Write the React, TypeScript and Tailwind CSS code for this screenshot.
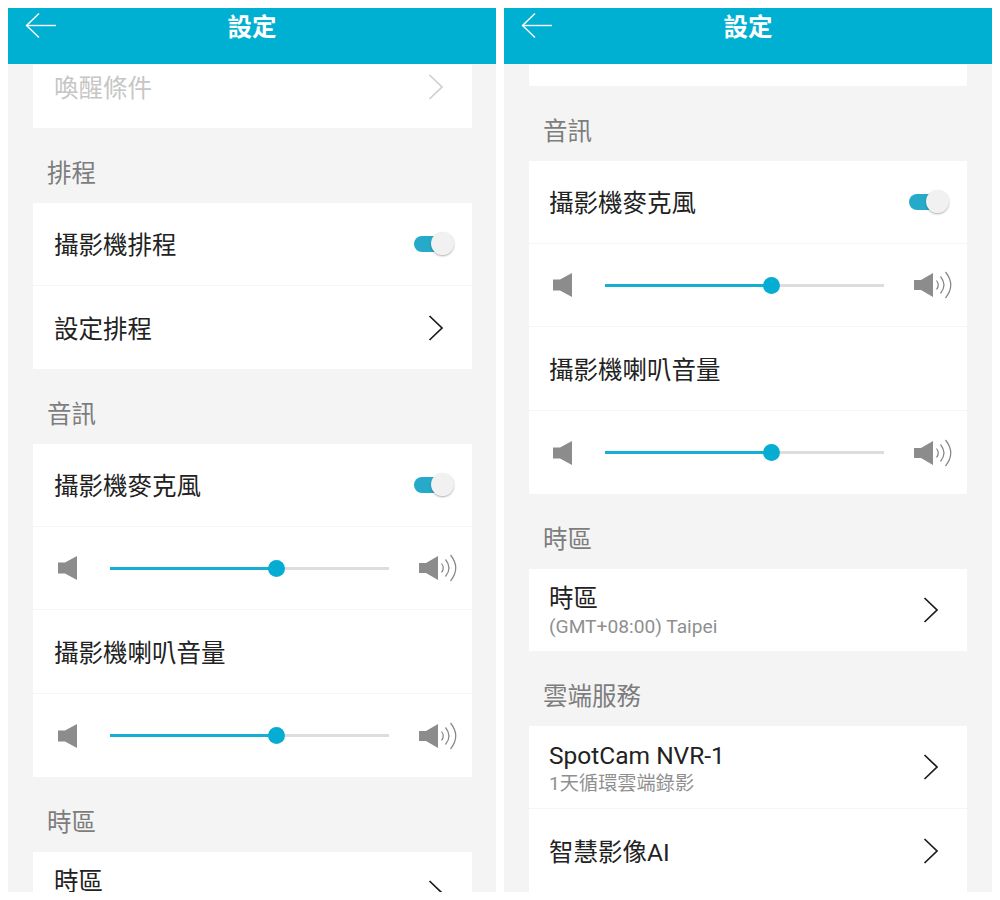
import type { ReactNode } from "react";

function BackArrow() {
  return (
    <svg width="32" height="28" viewBox="0 0 32 28" fill="none" stroke="white" strokeWidth="1.4" className="absolute left-[17px] top-[4px]">
      <path d="M14 1.5 1.5 13.5 14 25.5" />
      <path d="M1.5 13.5H31" />
    </svg>
  );
}

function Chevron({ light }: { light?: boolean }) {
  return (
    <svg width="16" height="26" viewBox="0 0 16 26" fill="none" stroke={light ? "#cfcfcf" : "#1a1a1a"} strokeWidth="1.7" className="mr-[10px]">
      <path d="M1.5 1 14 13 1.5 25" />
    </svg>
  );
}

function Toggle() {
  return (
    <div className="relative h-[24px] w-[40px]">
      <div className="absolute left-0 top-[4px] h-[16px] w-[30px] rounded-full bg-[#26aac9]" />
      <div className="absolute right-0 top-0 h-[23px] w-[23px] rounded-full bg-[#f1f1f1] shadow-[0_1px_2px_rgba(0,0,0,0.3)]" />
    </div>
  );
}

function SpeakerSmall() {
  return (
    <svg width="20" height="24" viewBox="0 0 20 24" fill="#8c8c8c">
      <path d="M0 6.5h7L19 0v24L7 17.500H0z" />
    </svg>
  );
}

function SpeakerLarge() {
  return (
    <svg width="38" height="28" viewBox="0 0 38 28">
      <path d="M0 9h7L19 2v24L7 19H0z" fill="#8c8c8c" />
      <g fill="none" stroke="#858585" strokeWidth="1.2">
        <path d="M22.500 9.500q3.500 4.500 0 9" />
        <path d="M26.500 5.500q7 8.500 0 17" />
        <path d="M31.500 1q10.500 13 0 26" />
      </g>
    </svg>
  );
}

function Row({ children, right, height = "h-[83px]" }: { children: ReactNode; right?: ReactNode; height?: string }) {
  return (
    <div className={`flex items-center justify-between border-b border-[#f5f5f5] pl-[var(--row-pl)] pr-[18px] last:border-b-0 ${height}`}>
      <div className="min-w-0">{children}</div>
      {right}
    </div>
  );
}

function Title({ text, sub, light }: { text: string; sub?: string; light?: boolean }) {
  return (
    <div className="pt-[4px]">
      <div className={`text-[24.5px] leading-[30px] ${light ? "text-[#c6c6c6]" : "text-[#222222]"}`}>{text}</div>
      {sub && <div className="text-[19.2px] leading-[26px] text-[#8f8f8f]">{sub}</div>}
    </div>
  );
}

function SliderRow() {
  return (
    <div className="flex h-[83px] items-center border-b border-[#f5f5f5] pl-[calc(var(--row-pl)+4px)] pr-[14px] last:border-b-0">
      <SpeakerSmall />
      <div className="relative ml-[32px] h-[3px] w-[279px] bg-[#dddddd]">
        <div className="h-full w-[167px] bg-[#14afd2]" />
        <div className="absolute left-[158px] top-[-7px] h-[17px] w-[17px] rounded-full bg-[#05add3]" />
      </div>
      <div className="ml-[30px]">
        <SpeakerLarge />
      </div>
    </div>
  );
}

function Label({ text }: { text: string }) {
  return <div className="flex h-[75px] items-center pl-[14px] pt-[17px] text-[24.5px] text-[#7d7d7d]">{text}</div>;
}

function Card({ children }: { children: ReactNode }) {
  return <div className="bg-white">{children}</div>;
}

function AudioSection() {
  return (
    <>
      <Label text="音訊" />
      <Card>
        <Row right={<Toggle />}>
          <Title text="攝影機麥克風" />
        </Row>
        <SliderRow />
        <Row height="h-[84px]">
          <Title text="攝影機喇叭音量" />
        </Row>
        <SliderRow />
      </Card>
      <Label text="時區" />
    </>
  );
}

function TimezoneCard() {
  return (
    <Card>
      <Row height="h-[82px]" right={<Chevron />}>
        <Title text="時區" sub="(GMT+08:00) Taipei" />
      </Row>
    </Card>
  );
}

function Panel({ className, children }: { className: string; children: ReactNode }) {
  return (
    <div className="flex h-[884px] w-[488px] flex-col overflow-hidden bg-[#f4f4f4]">
      <div className="relative z-10 h-[56px] shrink-0 bg-[#00b0d2] pt-[3px] text-center text-[24.5px] font-bold leading-[34px] text-white">
        <BackArrow />
        設定
      </div>
      <div className={className}>{children}</div>
    </div>
  );
}

export default function App() {
  return (
    <div
      className="flex h-[900px] w-[1000px] gap-2 bg-white p-2"
      style={{ fontFamily: 'Roboto, "Noto Sans CJK TC", sans-serif' }}
    >
      <Panel className="mt-[-19px] pl-[25px] pr-[24px] [--row-pl:21px]">
        <Card>
          <Row right={<Chevron light />}>
            <Title text="喚醒條件" light />
          </Row>
        </Card>
        <Label text="排程" />
        <Card>
          <Row right={<Toggle />}>
            <Title text="攝影機排程" />
          </Row>
          <Row right={<Chevron />}>
            <Title text="設定排程" />
          </Row>
        </Card>
        <AudioSection />
        <TimezoneCard />
      </Panel>
      <Panel className="mt-[-61px] px-[25px] [--row-pl:20px]">
        <Card>
          <Row>
            <span />
          </Row>
        </Card>
        <AudioSection />
        <TimezoneCard />
        <Label text="雲端服務" />
        <Card>
          <Row right={<Chevron />}>
            <Title text="SpotCam NVR-1" sub="1天循環雲端錄影" />
          </Row>
          <Row right={<Chevron />}>
            <Title text="智慧影像AI" />
          </Row>
        </Card>
      </Panel>
    </div>
  );
}
